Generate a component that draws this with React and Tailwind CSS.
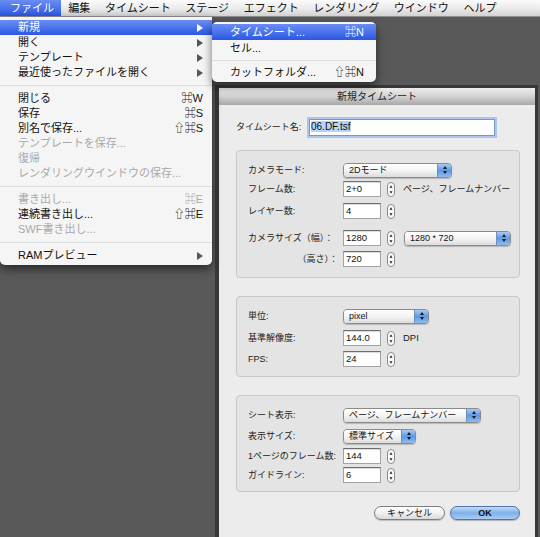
import clsx from "clsx";

const FONT = "font-['Liberation_Sans','Noto_Sans_CJK_JP','DejaVu_Sans',sans-serif]";

const menuBar = ["ファイル", "編集", "タイムシート", "ステージ", "エフェクト", "レンダリング", "ウインドウ", "ヘルプ"];

const fileMenu = [
  { label: "新規", arrow: true, active: true },
  { label: "開く", arrow: true },
  { label: "テンプレート", arrow: true },
  { label: "最近使ったファイルを開く", arrow: true },
  "sep",
  { label: "閉じる", sc: "⌘W" },
  { label: "保存", sc: "⌘S" },
  { label: "別名で保存...", sc: "⇧⌘S" },
  { label: "テンプレートを保存...", disabled: true },
  { label: "復帰", disabled: true },
  { label: "レンダリングウインドウの保存...", disabled: true },
  "sep",
  { label: "書き出し...", sc: "⌘E", disabled: true },
  { label: "連続書き出し...", sc: "⇧⌘E" },
  { label: "SWF書き出し...", disabled: true },
  "sep",
  { label: "RAMプレビュー", arrow: true },
];

const subMenu = [
  { label: "タイムシート...", sc: "⌘N", active: true },
  { label: "セル..." },
  "sep",
  { label: "カットフォルダ...", sc: "⇧⌘N" },
];

function Tri({ white }) {
  return (
    <svg width="6" height="8" viewBox="0 0 6 8">
      <path d="M0 0 L6 4 L0 8Z" fill={white ? "#fff" : "#555"} />
    </svg>
  );
}

function MenuRows({ items, h, pl, pr, sepH }) {
  return items.map((it, i) =>
    it === "sep" ? (
      <div key={i} className={clsx("flex items-center", sepH)}>
        <div className="h-px w-full bg-[#dedede]" />
      </div>
    ) : (
      <div
        key={i}
        className={clsx(
          "flex items-center leading-none",
          h,
          pl,
          pr,
          it.active
            ? "bg-linear-to-b from-[#6b8df3] to-[#2c56e4] text-white"
            : it.disabled
            ? "text-[#a9a9a9]"
            : "text-[#111]"
        )}
      >
        <span className="flex-1 whitespace-nowrap">{it.label}</span>
        {it.sc && <span className="whitespace-nowrap">{it.sc}</span>}
        {it.arrow && <Tri white={it.active} />}
      </div>
    )
  );
}

function Stepper() {
  return (
    <svg width="8" height="15" viewBox="0 0 8 15" className="shrink-0">
      <rect x="0.5" y="0.5" width="7" height="14" rx="3.5" fill="#fbfbfb" stroke="#8a8a8a" />
      <path d="M4 3.2 L5.5 5.8 H2.5Z" fill="#222" />
      <path d="M4 11.8 L5.5 9.2 H2.5Z" fill="#222" />
    </svg>
  );
}

function Field({ value, stepper = true, after }) {
  return (
    <div className="flex items-center">
      <div className="h-[16px] w-[38px] border border-[#a3a3a3] border-t-[#6d6d6d] bg-white pl-[2px] text-[9.5px] leading-[13px] text-[#111] shadow-[inset_0_1px_1px_rgba(0,0,0,0.15)]">
        {value}
      </div>
      {stepper && <div className="ml-[6px] flex"><Stepper /></div>}
      {after}
    </div>
  );
}

function Popup({ value, w }) {
  return (
    <div
      className={clsx(
        "flex h-[15px] overflow-hidden rounded-[4px] border border-[#8b8b8b] shadow-[0_1px_1px_rgba(0,0,0,0.2)]",
        w
      )}
    >
      <div className="flex flex-1 items-center bg-linear-to-b from-white via-[#f4f4f4] to-[#dcdcdc] pl-[5px] text-[9px] leading-none text-[#111]">
        {value}
      </div>
      <div className="flex w-[14px] items-center justify-center border-l border-[#6d8ec0] bg-linear-to-b from-[#a9cbf3] via-[#5f98e4] to-[#8fbcee]">
        <svg width="6" height="10" viewBox="0 0 6 10">
          <path d="M3 1 L5 4 H1Z" fill="#1a1a1a" />
          <path d="M3 9 L5 6 H1Z" fill="#1a1a1a" />
        </svg>
      </div>
    </div>
  );
}

function Row({ label, children, mt, right }) {
  return (
    <div className={clsx("flex h-[16px] items-center", mt)}>
      <div className={clsx("w-[95px] shrink-0 text-[9px] leading-none text-[#1a1a1a] whitespace-nowrap", right && "pr-[5px] text-right")}>
        {label}
      </div>
      {children}
    </div>
  );
}

function Group({ children, cls }) {
  return (
    <div className={clsx("rounded-[4px] border border-[#c8c8c8] bg-[#e4e4e4] pl-[11px]", cls)}>
      {children}
    </div>
  );
}

export default function App() {
  return (
    <div className={clsx("relative h-[537px] w-[540px] overflow-hidden bg-[#595959]", FONT)}>
      {/* menu bar */}
      <div className="flex h-[17px] border-b border-[#8e8e8e] bg-linear-to-b from-[#fbfbfb] via-[#ececec] to-[#d2d2d2] text-[11px] leading-[16px] text-[#111]">
        {menuBar.map((m, i) => (
          <div
            key={m}
            className={clsx(
              "whitespace-nowrap",
              i === 0 ? "bg-linear-to-b from-[#6b8df3] to-[#2c56e4] pl-[10px] pr-[7px] text-white" : "px-[7.3px]"
            )}
          >
            {m}
          </div>
        ))}
      </div>

      {/* dialog window */}
      <div className="absolute left-[215px] top-[85px] flex h-[470px] w-[323px] flex-col border-l-4 border-r-[3px] border-t-[3px] border-[#383838]">
        <div className="h-[17px] bg-linear-to-b from-[#ededed] via-[#d2d2d2] to-[#a8a8a8] text-center text-[10px] leading-[17px] text-[#222]">
          新規タイムシート
        </div>
        <div className="flex-1 bg-[#ececec] pl-[17px] pr-[15px]">
          <div className="mt-[14px] flex h-[17px] items-center">
            <div className="w-[73px] text-[9px] leading-none text-[#1a1a1a]">タイムシート名:</div>
            <div className="h-[17px] w-[186px] border border-[#7896c8] bg-white pl-[1px] pt-[1px] text-[10px] leading-[12px] text-[#111] shadow-[0_0_0_2px_#abc6ee]">
              <span className="bg-[#b9d3f6] pr-[1px]">06.DF.tsf</span>
            </div>
          </div>

          <Group cls="mt-[14px] pt-[11px] pb-[10px]">
            <Row label="カメラモード:">
              <Popup value="2Dモード" w="w-[109px]" />
            </Row>
            <Row label="フレーム数:" mt="mt-[3px]">
              <Field
                value="2+0"
                after={<span className="ml-[8px] text-[9px] leading-none text-[#1a1a1a]">ページ、フレームナンバー</span>}
              />
            </Row>
            <Row label="レイヤー数:" mt="mt-[6px]">
              <Field value="4" />
            </Row>
            <Row label="カメラサイズ（幅）：" mt="mt-[11px]">
              <Field value="1280" after={<div className="ml-[9px]"><Popup value="1280 * 720" w="w-[107px]" /></div>} />
            </Row>
            <Row label="（高さ）：" mt="mt-[5px]" right>
              <Field value="720" />
            </Row>
          </Group>

          <Group cls="mt-[18px] pt-[11px] pb-[9px]">
            <Row label="単位:">
              <Popup value="pixel" w="w-[86px]" />
            </Row>
            <Row label="基準解像度:" mt="mt-[6px]">
              <Field
                value="144.0"
                after={<span className="ml-[8px] text-[9.5px] leading-none text-[#1a1a1a]">DPI</span>}
              />
            </Row>
            <Row label="FPS:" mt="mt-[5px]">
              <Field value="24" />
            </Row>
          </Group>

          <Group cls="mt-[18px] pt-[11px] pb-[8px]">
            <Row label="シート表示:">
              <Popup value="ページ、フレームナンバー" w="w-[138px]" />
            </Row>
            <Row label="表示サイズ:" mt="mt-[5px]">
              <Popup value="標準サイズ" w="w-[73px]" />
            </Row>
            <Row label="1ページのフレーム数:" mt="mt-[4px]">
              <Field value="144" />
            </Row>
            <Row label="ガイドライン:" mt="mt-[3px]">
              <Field value="6" />
            </Row>
          </Group>

          <div className="mt-[14px] flex justify-end gap-[5px]">
            <div className="flex h-[14px] w-[71px] items-center justify-center rounded-full border border-[#7d7d7d] bg-linear-to-b from-white via-[#f1f1f1] to-[#d9d9d9] text-[9px] leading-none text-[#111] shadow-[0_1px_1px_rgba(0,0,0,0.2)]">
              キャンセル
            </div>
            <div className="flex h-[14px] w-[70px] items-center justify-center rounded-full border border-[#4f74aa] bg-linear-to-b from-[#c4dcf7] via-[#7fb0ea] to-[#a9cdf4] text-[9px] font-bold leading-none text-[#111] shadow-[0_1px_1px_rgba(0,0,0,0.25)]">
              OK
            </div>
          </div>
        </div>
      </div>

      {/* file menu */}
      <div className="absolute left-0 top-[17px] w-[212px] rounded-b-[5px] bg-[#f5f5f5] pb-[2px] pt-[3px] text-[11px] shadow-[0_4px_10px_rgba(0,0,0,0.55)]">
        <MenuRows items={fileMenu} h="h-[15px]" pl="pl-[18px]" pr="pr-[9px]" sepH="h-[11px]" />
      </div>

      {/* sub menu */}
      <div className="absolute left-[212px] top-[22px] w-[164px] rounded-[5px] bg-[#f5f5f5] pb-[2px] pt-[2px] text-[11px] shadow-[0_4px_10px_rgba(0,0,0,0.55)]">
        <MenuRows items={subMenu} h="h-[16px]" pl="pl-[18px]" pr="pr-[12px]" sepH="h-[8px]" />
      </div>
    </div>
  );
}
